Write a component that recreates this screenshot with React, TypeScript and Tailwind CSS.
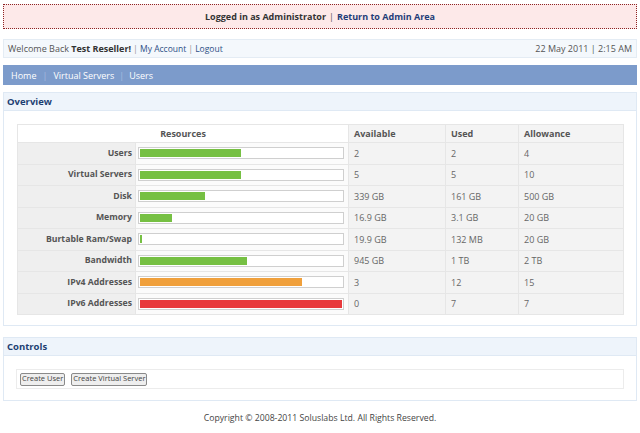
import React from "react";

type Row = {
  name: string;
  pct: number;
  color: string;
  available: string;
  used: string;
  allowance: string;
};

const rows: Row[] = [
  { name: "Users", pct: 50, color: "bg-[#76c043]", available: "2", used: "2", allowance: "4" },
  { name: "Virtual Servers", pct: 50, color: "bg-[#76c043]", available: "5", used: "5", allowance: "10" },
  { name: "Disk", pct: 32, color: "bg-[#76c043]", available: "339 GB", used: "161 GB", allowance: "500 GB" },
  { name: "Memory", pct: 16, color: "bg-[#76c043]", available: "16.9 GB", used: "3.1 GB", allowance: "20 GB" },
  { name: "Burtable Ram/Swap", pct: 1, color: "bg-[#76c043]", available: "19.9 GB", used: "132 MB", allowance: "20 GB" },
  { name: "Bandwidth", pct: 53, color: "bg-[#76c043]", available: "945 GB", used: "1 TB", allowance: "2 TB" },
  { name: "IPv4 Addresses", pct: 80, color: "bg-[#f0a03c]", available: "3", used: "12", allowance: "15" },
  { name: "IPv6 Addresses", pct: 100, color: "bg-[#e8393c]", available: "0", used: "7", allowance: "7" },
];

function Panel({ title, children }: { title: string; children: React.ReactNode }) {
  return (
    <div className="border border-[#dfe9f4] bg-white">
      <div className="h-[18px] bg-[#eef4fb] border-b border-[#dfe9f4] px-[3px] flex items-center">
        <span className="text-[9.5px] font-bold text-[#1d3f73]">{title}</span>
      </div>
      {children}
    </div>
  );
}

export default function App() {
  return (
    <div className="w-[640px] h-[433px] bg-white px-[3px] pt-[4px] font-['Open_Sans',sans-serif] text-[9px] text-[#444] leading-none">
      {/* Admin banner */}
      <div className="h-[25px] bg-[#fde9e9] border border-dotted border-[#8e2424] flex items-center justify-center font-bold text-[9px] text-[#333]">
        Logged in as Administrator <span className="mx-[3px] font-normal text-[#555]">|</span>
        <span className="text-[#1f3d78]">Return to Admin Area</span>
      </div>

      {/* Welcome bar */}
      <div className="mt-[10px] h-[19px] bg-[#f4f8fc] border border-[#e4ecf4] flex items-center justify-between px-[4px]">
        <div className="text-[#555]">
          Welcome Back <span className="font-bold text-[#333]">Test Reseller!</span>
          <span className="mx-[2px] text-[#999]">|</span>
          <span className="text-[#2d4f86] text-[8.5px]">My Account</span>
          <span className="mx-[2px] text-[#999]">|</span>
          <span className="text-[#2d4f86] text-[8.5px]">Logout</span>
        </div>
        <div className="text-[#555]">22 May 2011 | 2:15 AM</div>
      </div>

      {/* Nav */}
      <div className="mt-[7px] h-[20px] bg-[#7c9bcb] flex items-center px-[8px] text-white text-[9px]">
        <span>Home</span>
        <span className="mx-[6px] text-[#a6bde0]">|</span>
        <span>Virtual Servers</span>
        <span className="mx-[5px] text-[#a6bde0]">|</span>
        <span>Users</span>
      </div>

      {/* Overview */}
      <div className="mt-[7px]">
        <Panel title="Overview">
          <div className="px-[13px] pt-[13px] pb-[10px]">
            <table className="w-[606px] border-collapse table-fixed">
              <colgroup>
                <col className="w-[118px]" />
                <col className="w-[213px]" />
                <col className="w-[97px]" />
                <col className="w-[73px]" />
                <col className="w-[105px]" />
              </colgroup>
              <thead>
                <tr className="h-[18px]">
                  <th colSpan={2} className="bg-white border border-[#e6e6e6] font-bold text-[#555] text-center">
                    Resources
                  </th>
                  <th className="bg-[#f4f4f4] border border-[#e6e6e6] font-bold text-[#555] text-left pl-[5px]">Available</th>
                  <th className="bg-[#f4f4f4] border border-[#e6e6e6] font-bold text-[#555] text-left pl-[5px]">Used</th>
                  <th className="bg-[#f4f4f4] border border-[#e6e6e6] font-bold text-[#555] text-left pl-[5px]">Allowance</th>
                </tr>
              </thead>
              <tbody>
                {rows.map((r) => (
                  <tr key={r.name} className="h-[21.5px]">
                    <td className="bg-[#efefef] border border-[#e6e6e6] text-right pr-[3px] font-bold text-[#555] text-[8.7px]">{r.name}</td>
                    <td className="bg-[#fbfbfb] border border-[#e6e6e6] pl-[2px] pr-[3px]">
                      <div className="h-[12px] w-[206px] border border-[#cfcfcf] bg-white p-px">
                        <div className={`h-full ${r.color}`} style={{ width: `${r.pct}%`, minWidth: "2px" }} />
                      </div>
                    </td>
                    <td className="bg-[#f3f3f3] border border-[#e6e6e6] pl-[5px] text-[#666]">{r.available}</td>
                    <td className="bg-[#f3f3f3] border border-[#e6e6e6] pl-[5px] text-[#666]">{r.used}</td>
                    <td className="bg-[#f3f3f3] border border-[#e6e6e6] pl-[5px] text-[#666]">{r.allowance}</td>
                  </tr>
                ))}
              </tbody>
            </table>
          </div>
        </Panel>
      </div>

      {/* Controls */}
      <div className="mt-[11px]">
        <Panel title="Controls">
          <div className="px-[12px] pt-[13px] pb-[11px]">
            <div className="h-[20px] border border-[#ececec] flex items-center gap-[6px] px-[3px]">
              <button className="h-[13px] px-[1px] border border-[#8a8a8a] rounded-[2px] bg-[#eeeeee] text-[7.5px] text-[#444] leading-none">
                Create User
              </button>
              <button className="h-[13px] px-[1px] border border-[#8a8a8a] rounded-[2px] bg-[#eeeeee] text-[7.5px] text-[#444] leading-none">
                Create Virtual Server
              </button>
            </div>
          </div>
        </Panel>
      </div>

      {/* Footer */}
      <div className="mt-[13px] text-center text-[#444] text-[8.7px]">
        Copyright © 2008-2011 Soluslabs Ltd. All Rights Reserved.
      </div>
    </div>
  );
}
